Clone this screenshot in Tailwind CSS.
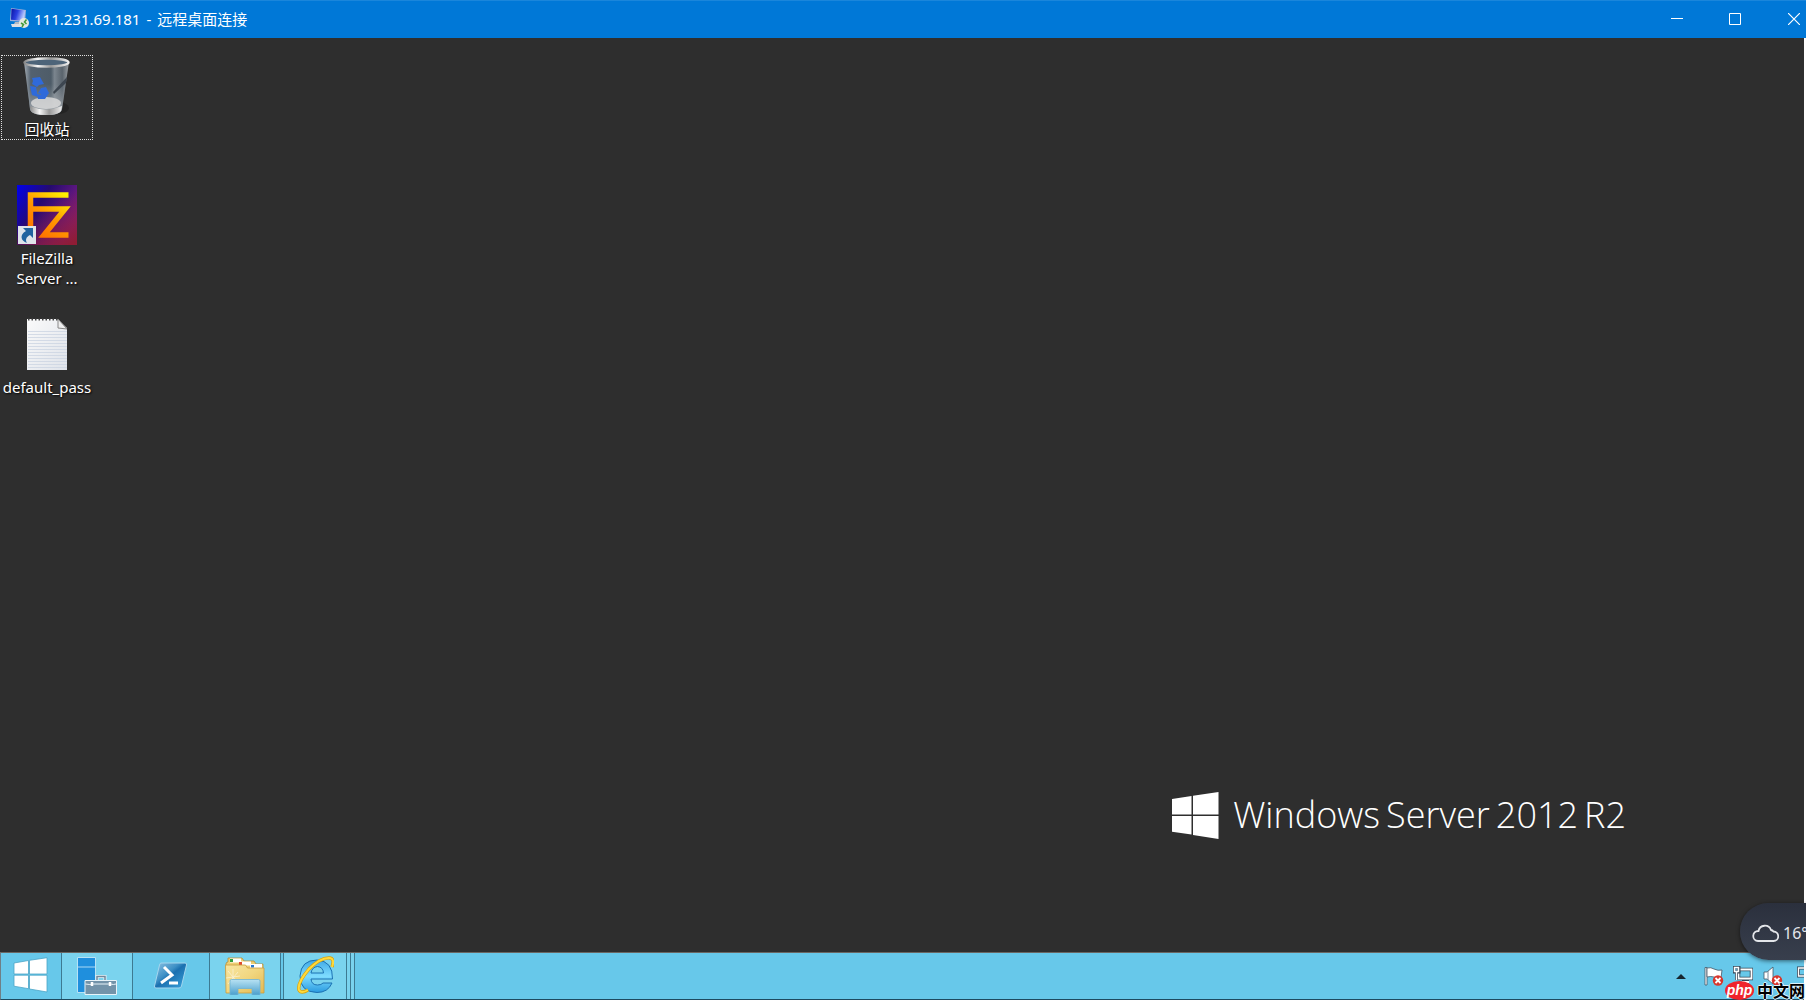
<!DOCTYPE html>
<html lang="zh-CN">
<head>
<meta charset="utf-8">
<title>111.231.69.181 - 远程桌面连接</title>
<script src="https://cdn.jsdelivr.net/npm/@tailwindcss/browser@4"></script>
</head>
<body class="flex h-screen flex-col overflow-hidden bg-white font-['Noto_Sans','Noto_Sans_CJK_SC',sans-serif] text-[15px] leading-5 text-white">

<!-- Title bar -->
<header class="flex h-[38px] shrink-0 items-center border-t border-[#1a86db] bg-[#0078d7] pb-0.5 pl-2">
  <svg class="mr-[5px] size-[21px]" viewBox="0 0 21 21" aria-hidden="true">
    <defs><linearGradient id="scr" x1="0" y1="0" x2="1" y2="0.3"><stop offset="0" stop-color="#0a12a0"/><stop offset=".5" stop-color="#2a3fe0"/><stop offset="1" stop-color="#b8ccff"/></linearGradient></defs>
    <path d="M3 0 L18 2 L17 14 L2 13Z" fill="#9fb0d8"/><path d="M3.500 .8 L17 2.500 L16 12.800 L3 11.800Z" fill="url(#scr)"/>
    <path d="M7 14h6l1 4-9 0z" fill="#b5b9c2"/><path d="M3 16l9 0 2 3-10 0z" fill="#dedfe3"/>
    <circle cx="16" cy="15" r="5" fill="#e4e9e1"/><path d="M13 15l2.500 1.500L14 19M18.500 11.500L16.500 14l2 2" stroke="#419a39" stroke-width="1.500" fill="none"/>
  </svg>
  <h1 class="flex gap-1.5"><span>111.231.69.181</span><span>-</span><span>远程桌面连接</span></h1>
  <div class="-mr-[18px] ml-auto flex self-stretch">
    <button class="flex w-[58px] items-center justify-center" aria-label="最小化"><svg class="size-3" viewBox="0 0 12 12"><path d="M0 5.500h12" stroke="#fff"/></svg></button>
    <button class="flex w-[58px] items-center justify-center" aria-label="最大化"><svg class="size-3" viewBox="0 0 12 12"><path d="M.5.5h11v11H.5z" fill="none" stroke="#fff"/></svg></button>
    <button class="flex w-[60px] items-center justify-center" aria-label="关闭"><svg class="size-3" viewBox="0 0 12 12"><path d="M0 0l12 12M12 0L0 12" stroke="#fff" stroke-width="1.200"/></svg></button>
  </div>
</header>

<!-- Remote desktop surface -->
<main class="mr-0.5 flex min-h-0 grow bg-[#2e2e2e]">
  <nav class="flex flex-col gap-11 pt-[17px] pl-px text-center [text-shadow:1px_1px_2px_#000]" aria-label="桌面图标">
    <a href="#" class="flex h-[85px] w-[92px] flex-col items-center border border-dotted border-[#e0e0e0]">
      <svg class="mb-[3px] h-[60px] w-[50px] shrink-0" viewBox="0 0 50 60" aria-hidden="true">
        <defs>
          <linearGradient id="bin" x1="0" x2="1" y1="0" y2="0"><stop offset="0" stop-color="#a5adb4"/><stop offset=".15" stop-color="#53616f"/><stop offset=".6" stop-color="#4e5c68"/><stop offset=".68" stop-color="#7b858e"/><stop offset=".85" stop-color="#59636c"/><stop offset="1" stop-color="#9ca0a4"/></linearGradient>
          <linearGradient id="rim" x1="0" x2="1"><stop offset="0" stop-color="#8a8a8a"/><stop offset=".3" stop-color="#f5f5f5"/><stop offset=".6" stop-color="#999"/><stop offset="1" stop-color="#eee"/></linearGradient>
          <linearGradient id="low" x1="0" x2="0" y1="0" y2="1"><stop offset="0" stop-color="#9fa5aa" stop-opacity="0"/><stop offset="1" stop-color="#bfc3c6" stop-opacity=".8"/></linearGradient>
        </defs>
        <ellipse cx="36" cy="52" rx="11" ry="6" fill="#232323"/>
        <path d="M2 6 L8 53 Q9 59 24 59 T40 53 L47 6Z" fill="url(#bin)"/>
        <path d="M5 28 L8 53 Q9 59 24 59 T40 53 L44 28Z" fill="url(#low)"/>
        <path d="M45 21L31 36l1 2 12-11z" fill="#3d4650"/>
        <ellipse cx="24" cy="47" rx="15" ry="6" fill="#d9d9d9" opacity=".85"/>
        <path d="M8 50 Q24 57 40 50 L39 55 Q36 59 24 59 T9 55Z" fill="url(#rim)"/>
        <path d="M10 22l8-1 4 7-5 1-2 2-5-3 1-3zM8 30l6 1 1 5 1 5-6-2zM19 32l5-1 3 6-4 6-3-1-1-4-3-1zM15 38l6 1 3-1-1 5-7 0z" fill="#2f6ada"/>
        <ellipse cx="24.500" cy="6.500" rx="22" ry="4" fill="#4d6479" stroke="url(#rim)" stroke-width="2.400"/>
      </svg>
      <span>回收站</span>
    </a>
    <a href="#" class="flex h-[85px] w-[92px] flex-col items-center border border-transparent">
      <svg class="mb-[3px] size-[60px] shrink-0" viewBox="0 0 60 60" aria-hidden="true">
        <defs>
          <linearGradient id="fzbg" x1="0" y1="0" x2="1" y2=".6"><stop offset="0" stop-color="#0000ef"/><stop offset=".42" stop-color="#250a70"/><stop offset="1" stop-color="#85208a"/></linearGradient>
          <linearGradient id="fzred" x1=".4" y1=".2" x2=".9" y2="1"><stop offset=".2" stop-color="#8a1a30" stop-opacity="0"/><stop offset="1" stop-color="#8f1c34"/></linearGradient>
          <linearGradient id="gold" gradientUnits="userSpaceOnUse" x1="14" y1="50" x2="46" y2="8"><stop offset="0" stop-color="#ff6a00"/><stop offset=".5" stop-color="#ff9800"/><stop offset="1" stop-color="#fff000"/></linearGradient>
        </defs>
        <path d="M0 0h60v60H0z" fill="url(#fzbg)"/><path d="M0 0h60v60H0z" fill="url(#fzred)"/>
        <g fill="none" stroke="url(#gold)" stroke-width="5.500"><path d="M51.500 10H13.500V42"/><path d="M14 24H48L27 50H51.500"/></g>
        <path d="M1 41h18v18H1z" fill="#dfe4ea"/><path d="M6 43h10v10l-3-3c-4 2-5 5-3 8-6-2-8-8-1-12z" fill="#21639f"/>
      </svg>
      <span>FileZilla Server&nbsp;...</span>
    </a>
    <a href="#" class="flex h-[85px] w-[92px] flex-col items-center border border-transparent">
      <svg class="mb-[3px] h-[60px] w-[42px] shrink-0" viewBox="0 0 42 60" aria-hidden="true">
        <defs><linearGradient id="paper" x1="0" y1="0" x2="1" y2="1"><stop offset="0" stop-color="#fafafa"/><stop offset="1" stop-color="#dfe3ea"/></linearGradient></defs>
        <path d="M1 5h30l10 9v42H1z" fill="url(#paper)"/>
        <path d="M2 5.500h30" stroke="#444" stroke-width="2" stroke-dasharray="1.500 2"/>
        <path d="M2 17.500h39M2 20.500h39M2 23.500h39M2 26.500h39M2 29.500h39M2 32.500h39M2 35.500h39M2 38.500h39M2 41.500h39M2 44.500h39M2 47.500h39M2 50.500h39M2 53.500h39" stroke="#cbd4e2" stroke-width=".8"/>
        <path d="M32 5l9 10-9-1z" fill="#eee" stroke="#888"/>
      </svg>
      <span>default_pass</span>
    </a>
  </nav>

  <div class="mr-[178px] mb-[112px] ml-auto flex items-center gap-3.5 self-end">
    <svg class="size-[47px]" viewBox="0 0 47 47" fill="#fff" aria-hidden="true"><path d="M0 7l19.500-3v18.500H0zM21 3.700L46.500 0v22.500H21zM0 24h19.500v18.500L0 39.700zM21 24h25.500v23L21 43z"/></svg>
    <p class="flex gap-1.5 font-['Open_Sans','Noto_Sans',sans-serif] text-[36px] leading-[50px] font-[350] whitespace-nowrap"><span>Windows</span><span>Server</span><span>2012</span><span>R2</span></p>
  </div>
</main>

<!-- Taskbar -->
<footer class="mr-0.5 flex h-12 shrink-0 border-t border-b border-l border-t-[#6b6763] border-b-[#1d4a60] border-l-[#6f7f86] bg-[#67c8ea]">
  <button class="flex w-[61px] items-center justify-center border-r border-[#3d7a92] pr-0.5 pb-0.5" aria-label="开始">
    <svg class="h-9 w-[35px]" viewBox="0 0 35 36" fill="#fff" stroke="#4ba5c6" stroke-width=".8" aria-hidden="true"><path d="M1 6l14.500-2.500V17H1zM16.500 3.300L34 .7V17H16.500zM1 18.200h14.500v13.500L1 29.200zM16.500 18.200H34V35l-17.500-3z"/></svg>
  </button>
  <button class="flex w-[71px] items-center justify-center border-r border-[#3d7a92] bg-[#7ad3ee]" aria-label="服务器管理器">
    <svg class="h-[38px] w-10" viewBox="0 0 40 38" aria-hidden="true">
      <path d="M.5.5h18v35H.5z" fill="#1f8fdd" stroke="#b7e2f5"/><path d="M1 10h17" stroke="#7cc0ec" stroke-width="1.500"/>
      <path d="M20 23v-3.500h8V23" fill="none" stroke="#e8f3f8" stroke-width="3"/><path d="M20 23v-3.500h8V23" fill="none" stroke="#70899c" stroke-width="1.500"/>
      <path d="M8 23.500h31.500v14H8z" fill="#7393a9" stroke="#e8f3f8"/><path d="M8.500 27q5 1 7 0h18q3 1 5.500 0" stroke="#e8f3f8" fill="none"/><path d="M15 25v4M33 25v4" stroke="#fff" stroke-width="2.500"/>
    </svg>
  </button>
  <button class="flex w-[77px] items-center justify-center border-r border-[#3d7a92] pb-0.5" aria-label="PowerShell">
    <svg class="h-[27px] w-[34px]" viewBox="0 0 34 27" aria-hidden="true">
      <defs><linearGradient id="ps" x1="0" y1="0" x2="1" y2="1"><stop offset="0" stop-color="#8fc4e4"/><stop offset=".4" stop-color="#3c8fc5"/><stop offset=".5" stop-color="#1b70b0"/><stop offset="1" stop-color="#3aa3dc"/></linearGradient></defs>
      <path d="M7 1h24q2 0 1.500 2l-5 21q-.5 2-2.500 2H2q-2 0-1.500-2l5-21Q6 1 7 1z" fill="url(#ps)" stroke="#a4d6ee"/>
      <path d="M10 5l8 8L7 21M15 21h9" fill="none" stroke="#fff" stroke-width="3"/>
    </svg>
  </button>
  <button class="flex w-[71px] items-center justify-center border-r border-[#3d7a92] bg-[#7ad3ee]" aria-label="文件资源管理器">
    <svg class="h-[38px] w-10" viewBox="0 0 40 38" aria-hidden="true">
      <defs><linearGradient id="fold" x1="0" y1="0" x2="1" y2="1"><stop offset="0" stop-color="#f8e6a2"/><stop offset=".5" stop-color="#f1d67f"/><stop offset="1" stop-color="#e2b851"/></linearGradient><linearGradient id="tray" x1="0" y1="0" x2="0" y2="1"><stop offset="0" stop-color="#b8e2f3"/><stop offset="1" stop-color="#4a9fcd"/></linearGradient></defs>
      <path d="M1 7q0-2 2-2V1h14l2 3h10l2 3h7v11H1z" fill="#edcf74" stroke="#b98e35" stroke-width=".8"/>
      <path d="M5 1.500h11v4H5zM14 4.500h12v4H14zM25 7h12v4H25z" fill="#fff"/><path d="M5 2h3v3H5z" fill="#2f9e3a"/><path d="M14 5h3v3h-3z" fill="#e04a2f"/><path d="M26 8h3v2.500h-3z" fill="#2779d0"/>
      <path d="M.5 8h20l2 3h16.500v25H1z" fill="url(#fold)" stroke="#c99c3f" stroke-width=".8"/>
      <path d="M8 12v18M1 21l14-2M3 14l10 12M3 27l10-12" stroke="#fff" stroke-width=".8" opacity=".6"/>
      <path d="M5 24q0-1.500 1.500-1.500h27q1.500 0 1.500 1.500v14h-8v-6.500H13V38H5z" fill="url(#tray)" stroke="#6fb4d6" stroke-width=".8"/>
    </svg>
  </button>
  <button class="ml-0.5 flex w-16 items-center justify-center border-x border-[#3d7a92] bg-[#7ad3ee] pb-0.5" aria-label="Internet Explorer">
    <svg class="h-[38px] w-[38px]" viewBox="0 0 38 38" aria-hidden="true">
      <defs><linearGradient id="ie" x1="0" y1="0" x2="0" y2="1"><stop offset="0" stop-color="#3fa9e6"/><stop offset=".5" stop-color="#7edcff"/><stop offset="1" stop-color="#2b9be0"/></linearGradient></defs>
      <path d="M36.500 23H15q.5 6 6.500 6 4 0 5.500-2h9q-4 9.500-15 9.500Q4 36 4 20 5 4 21 4q16 1 15.500 19zM15 17h12.500q-.5-6-6-6.500Q16 11 15 17z" fill="url(#ie)" stroke="#1c72b3" stroke-width="1"/>
      <path d="M36 11Q39 3 34 2 25 1 13 13 1 27 3 34q2 4 9 0" fill="none" stroke="#d9a30c" stroke-width="3.400"/><path d="M36 11Q39 3 34 2 25 1 13 13 1 27 3 34q2 4 9 0" fill="none" stroke="#ffd93b" stroke-width="2"/>
    </svg>
  </button>
  <div class="flex w-2 border-r border-[#3d7a92] bg-[#7ad3ee]"><span class="w-1 border-r border-[#3d7a92]"></span></div>

  <!-- Notification area -->
  <div class="ml-auto flex items-center">
    <button class="mr-[18px]" aria-label="显示隐藏的图标"><svg class="h-[5px] w-[10px]" viewBox="0 0 10 5"><path d="M5 0l5 5H0z" fill="#16262e"/></svg></button>
    <button class="mr-[9px]" aria-label="操作中心"><svg class="h-5 w-5" viewBox="0 0 20 20">
      <path d="M1 1.500h2V19H1z" fill="#fff" stroke="#456" stroke-width=".8"/><path d="M3 2q4-1 7 1 4 2 8 1l-1 8q-4 1-7-1-3-1-7 0z" fill="#fff" stroke="#456" stroke-width=".8"/>
      <circle cx="14" cy="14.500" r="5.200" fill="#d8362c"/><path d="M11.500 12l5 5M16.500 12l-5 5" stroke="#fff" stroke-width="1.800"/></svg></button>
    <button class="mr-2.5" aria-label="网络"><svg class="h-5 w-5" viewBox="0 0 20 20" fill="none">
      <path d="M5.500 3.500h13v9h-13zM9 16h7" stroke="#345" stroke-width="3.500"/><path d="M5.500 3.500h13v9h-13zM9 16h7" stroke="#fff" stroke-width="1.800"/>
      <path d="M1 1h5v5H1zM3.500 6v8" stroke="#345" stroke-width="3"/><path d="M1.500 1.500h4v4h-4zM3.500 6v8" stroke="#fff" stroke-width="1.500"/></svg></button>
    <button class="mr-3.5" aria-label="音量"><svg class="h-5 w-5" viewBox="0 0 20 20">
      <path d="M1 6h3l6-5v17l-6-5H1z" fill="#fff" stroke="#456" stroke-width=".8"/><path d="M5 5v9" stroke="#789"/>
      <circle cx="14" cy="14.500" r="5.200" fill="#d8362c"/><path d="M11.500 12l5 5M16.500 12l-5 5" stroke="#fff" stroke-width="1.800"/></svg></button>
    <button class="pb-2" aria-label="输入法"><svg class="h-3 w-[7px]" viewBox="0 0 7 12"><path d="M8 2H1.500v8H8" fill="none" stroke="#345" stroke-width="3"/><path d="M8 2H1.500v8H8" fill="none" stroke="#fff" stroke-width="1.400"/></svg></button>
  </div>
</footer>

<!-- Floating weather pill -->
<aside class="absolute right-0 bottom-10 flex h-[57px] w-[66px] items-center gap-1 overflow-hidden rounded-l-full bg-linear-to-b from-[#2b303d] to-[#383f4d] pt-0.5 pl-3 shadow-[0_1px_4px_#0008]">
  <svg class="h-5 w-[27px] shrink-0" viewBox="0 0 27 20" fill="none" stroke="#e4e6ea" stroke-width="1.800" aria-hidden="true"><path d="M6 18h15.500a4.500 4.500 0 0 0 0-9.500A4 4 0 0 0 19 7 6.500 6.500 0 0 0 6.500 8 5 5 0 0 0 6 18z"/></svg>
  <span class="text-base leading-5 text-[#e4e6ea]">16°</span>
</aside>

<!-- Site mark -->
<div class="absolute right-0 bottom-0 flex h-[19px] w-[81px] items-center gap-[3px] font-bold whitespace-nowrap">
  <span class="flex h-[19px] w-[29px] shrink-0 items-center justify-center rounded-[50%] bg-[#f0242c] pb-0.5 font-['Liberation_Sans',sans-serif] text-sm leading-4 italic">php</span>
  <span class="text-base leading-[18px] text-black [text-shadow:1px_0_0_#dff4fc,-1px_0_0_#dff4fc,0_1px_0_#dff4fc,0_-1px_0_#dff4fc]">中文网</span>
</div>
</body>
</html>
